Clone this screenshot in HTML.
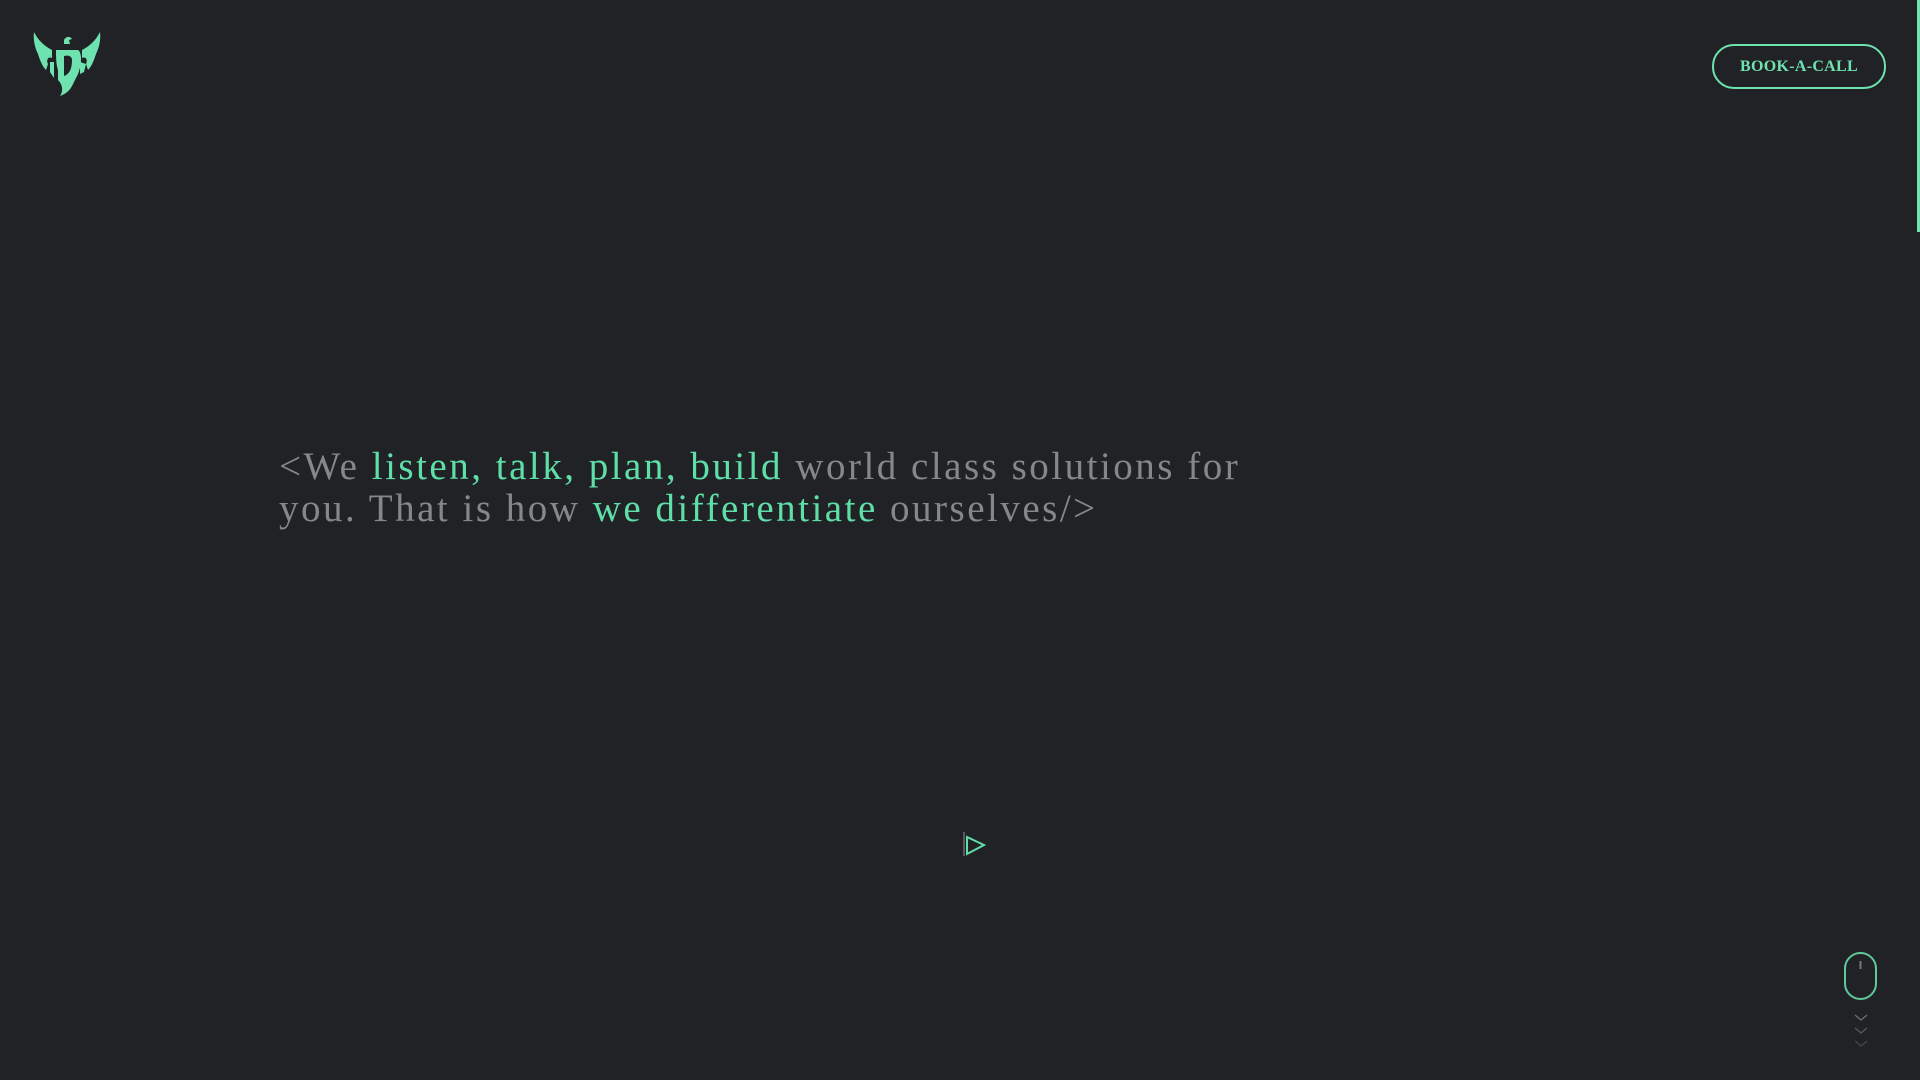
<!DOCTYPE html>
<html><head><meta charset="utf-8"><style>
html,body{margin:0;padding:0;width:1920px;height:1080px;overflow:hidden;background:#212226;}
.t{position:absolute;left:279px;top:446px;font-family:"Liberation Serif",serif;font-size:39px;line-height:42px;color:#85878a;font-weight:300;letter-spacing:2.5px;}
.g{color:#5fdfa8;}
.btn{position:absolute;left:1712px;top:44px;width:170px;height:41px;border:2px solid #6ee3b0;border-radius:22px;box-sizing:content-box;text-align:center;line-height:41px;font-family:"Liberation Serif",serif;font-weight:bold;font-size:16px;letter-spacing:0.3px;color:#6ee3b0;}
.sb{position:absolute;right:0;top:0;width:3px;height:232px;background:#6ee3b0;}
</style></head><body>
<svg style="position:absolute;left:30px;top:30px" width="74" height="68" viewBox="0 0 74 68">
<g fill="#6ee3b0">
<path d="M4 2 C8 10 14 16 22 20 L22 28 C18 26 16 30 18 34 L16 40 C12 36 10 30 8 24 C5 18 3 10 4 2Z"/>
<path d="M70 2 C66 10 60 16 52 20 L52 28 C56 26 58 30 56 34 L58 40 C62 36 64 30 66 24 C69 18 71 10 70 2Z"/>
<path d="M34 10 C36 6 40 6 42 9 L39 10 L40 14 L34 14Z"/>
<path d="M26 20 L48 20 C52 22 52 34 48 44 L42 56 C40 60 36 64 30 66 C34 60 32 54 28 50 L28 40 C26 34 26 26 26 20Z M34 26 L34 46 C40 44 42 38 42 30 C42 26 38 25 34 26Z" fill-rule="evenodd"/>
<path d="M20 32 L24 32 L24 48 L20 42Z"/>
<path d="M50 32 L56 34 L54 42 L50 44Z"/>
</g></svg>
<div class="btn">BOOK-A-CALL</div>
<div class="sb"></div>
<div class="t">&lt;We <span class="g">listen, talk, plan, build</span> world class solutions for<br>you. That is how <span class="g">we differentiate</span> ourselves/&gt;</div>
<svg style="position:absolute;left:960px;top:830px" width="30" height="30" viewBox="0 0 30 30">
<path d="M4 2 L4 26" stroke="#6b6d70" stroke-width="1.5"/>
<path d="M7 7 L24 15 L7 24 Z" fill="none" stroke="#5fdfa8" stroke-width="2"/>
</svg>
<svg style="position:absolute;left:1840px;top:950px" width="44" height="110" viewBox="0 0 44 110">
<rect x="5" y="3" width="31" height="46" rx="15.5" fill="none" stroke="#5fc99a" stroke-width="2"/>
<rect x="19.5" y="11" width="2" height="8" fill="#777"/>
<path d="M15 65 L21 70 L27 65" fill="none" stroke="#6b6d70" stroke-width="1.3"/>
<path d="M15 78 L21 83 L27 78" fill="none" stroke="#57595c" stroke-width="1.3"/>
<path d="M15 91 L21 96 L27 91" fill="none" stroke="#45474a" stroke-width="1.3"/>
</svg>
</body></html>
